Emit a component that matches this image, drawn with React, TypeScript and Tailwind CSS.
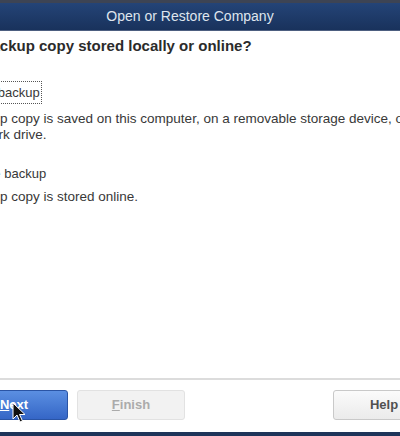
import React from 'react';

const font = { fontFamily: '"Liberation Sans", Arial, sans-serif' };

function Cursor() {
  return (
    <svg className="absolute left-[12px] top-[402px]" width="14" height="22" viewBox="0 0 14 22">
      <path d="M1 1 L1 17 L5 13 L8 20 L10.5 19 L7.5 12.5 L13 12.5 Z" fill="#111" stroke="#fff" strokeWidth="1" strokeLinejoin="round" />
    </svg>
  );
}

export default function App() {
  return (
    <div className="relative w-[400px] h-[436px] overflow-hidden bg-white flex flex-col" style={font}>
      <div className="h-[3px] bg-[#3d4454]" />
      <div className="h-[28px] flex items-center justify-center pr-[20px] bg-gradient-to-b from-[#244477] to-[#19325c] border-b border-[#4d5f80]">
        <span className="text-[14px] text-[#dfe5ee]">Open or Restore Company</span>
      </div>

      <div className="flex flex-col pt-[6px] text-[#383838]">
        <div className="ml-[-61px] whitespace-nowrap text-[15px] leading-[17px] font-bold text-[#2b2b2b]">
          Is the backup copy stored locally or online?
        </div>

        <div className="mt-[27px] ml-[-39px] self-start border border-dotted border-[#555] px-[1px] h-[23px] leading-[21px] text-[13px] whitespace-nowrap">
          Local backup
        </div>
        <div className="mt-[7px] ml-[-37.5px] text-[13.5px] leading-[16px] whitespace-nowrap">
          <div>Backup copy is saved on this computer, on a removable storage device, or</div>
          <div>network drive.</div>
        </div>

        <div className="mt-[19px] ml-[-39px] self-start border border-transparent px-[1px] h-[23px] leading-[21px] text-[13px] whitespace-nowrap">
          Online backup
        </div>
        <div className="mt-[4px] ml-[-37.5px] text-[13.5px] leading-[16px] whitespace-nowrap">
          Backup copy is stored online.
        </div>
      </div>

      <div className="flex-1" />
      <div className="h-[2px] bg-[#dcdcdc]" />
      <div className="mt-[10px] ml-[-40px] w-[475px] h-[30px] flex text-[13px] font-bold">
        <button className="w-[108px] h-[30px] rounded-[3px] border border-[#2a54a5] bg-gradient-to-b from-[#5b8fe2] to-[#3566c6] text-white">
          <span className="underline">N</span>ext
        </button>
        <button className="ml-[9px] w-[108px] h-[30px] rounded-[3px] border border-[#e2e2e2] bg-[#f2f2f2] text-[#ababab]">
          <span className="underline">F</span>inish
        </button>
        <button className="ml-auto w-[102px] h-[30px] rounded-[3px] border border-[#c9c9c9] bg-gradient-to-b from-[#fbfbfb] to-[#ebebeb] text-[#505050]">
          Help
        </button>
      </div>
      <div className="h-[12px]" />
      <div className="h-[4px] bg-[#1e3459]" />
      <Cursor />
    </div>
  );
}
